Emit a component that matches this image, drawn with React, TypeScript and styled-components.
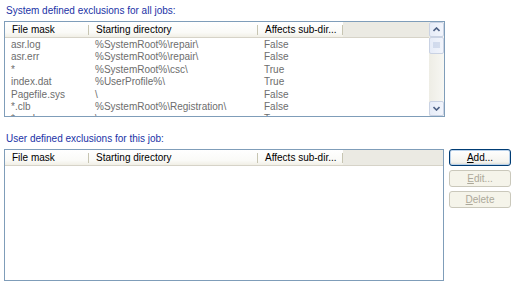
import React from "react";
import styled, { createGlobalStyle } from "styled-components";

const Global = createGlobalStyle`
  html, body { margin: 0; padding: 0; background: #ffffff; }
  body { font-family: Tahoma, "Liberation Sans", Arial, sans-serif; font-size: 10px; }
`;

const Page = styled.div`
  width: 515px;
  height: 284px;
  padding: 5px 0 0 4px;
  box-sizing: border-box;
  display: flex;
  flex-direction: column;
`;

const Label = styled.div<{ $top?: number }>`
  color: #1a32a6;
  font-size: 10px;
  line-height: 12px;
  padding-left: 2px;
  margin-top: ${(p) => p.$top ?? 0}px;
  margin-bottom: 4px;
`;

const Row = styled.div`
  display: flex;
  gap: 5px;
  align-items: flex-start;
`;

const ListBox = styled.div<{ $w: number; $h: number }>`
  width: ${(p) => p.$w}px;
  height: ${(p) => p.$h}px;
  box-sizing: border-box;
  border: 1px solid #7f9db9;
  background: #fff;
  display: flex;
  overflow: hidden;
`;

const ListMain = styled.div`
  flex: 1;
  display: flex;
  flex-direction: column;
  min-width: 0;
`;

const Header = styled.div`
  display: flex;
  height: 15px;
  background: #ebeae3;
  border-bottom: 1px solid #d6d3c8;
  flex-shrink: 0;
`;

const HeaderCell = styled.div<{ $w: number }>`
  width: ${(p) => p.$w}px;
  box-sizing: border-box;
  background: linear-gradient(#ffffff, #fafaf7 70%, #f1efe6);
  color: #000;
  line-height: 15px;
  padding-left: 7px;
  position: relative;
  white-space: nowrap;
  &::after {
    content: "";
    position: absolute;
    right: 0;
    top: 3px;
    bottom: 2px;
    width: 1px;
    background: #c7c5b2;
  }
`;

const HeaderRest = styled.div`
  flex: 1;
`;

const DataRow = styled.div`
  display: flex;
  height: 12.4px;
  line-height: 12px;
  color: #6d6d6d;
  white-space: nowrap;
  flex-shrink: 0;
`;

const Cell = styled.div<{ $w: number }>`
  width: ${(p) => p.$w}px;
  box-sizing: border-box;
  padding-left: 6px;
  overflow: hidden;
`;

const Rows = styled.div`
  padding-top: 1px;
  overflow: hidden;
  flex: 1;
`;

const Scrollbar = styled.div`
  width: 15px;
  display: flex;
  flex-direction: column;
  background: linear-gradient(90deg, #eeede5, #f7f7f3);
  flex-shrink: 0;
`;

const ScrollBtn = styled.div`
  height: 15px;
  box-sizing: border-box;
  border: 1px solid #c9d2e3;
  border-radius: 2px;
  background: linear-gradient(90deg, #e6ecf8, #f2f5fc);
  display: flex;
  align-items: center;
  justify-content: center;
`;

const Thumb = styled(ScrollBtn)`
  height: 17px;
`;

const Track = styled.div`
  flex: 1;
`;

const Buttons = styled.div`
  display: flex;
  flex-direction: column;
  gap: 4px;
`;

const Button = styled.div<{ $disabled?: boolean; $default?: boolean }>`
  width: 62px;
  height: 17px;
  box-sizing: border-box;
  border-radius: 3px;
  border: 1px solid ${(p) => (p.$disabled ? "#cac8bb" : "#003c74")};
  background: ${(p) =>
    p.$disabled ? "#f5f4ea" : "linear-gradient(#ffffff, #f4f3ee 80%, #dcdad0)"};
  color: ${(p) => (p.$disabled ? "#aca899" : "#000")};
  box-shadow: ${(p) => (p.$default ? "inset 0 0 0 1px #b9d1ea" : "none")};
  text-align: center;
  line-height: 15px;
  & u { text-decoration: underline; }
`;

const cols = [84, 169, 85];

const data = [
  ["asr.log", "%SystemRoot%\\repair\\", "False"],
  ["asr.err", "%SystemRoot%\\repair\\", "False"],
  ["*", "%SystemRoot%\\csc\\", "True"],
  ["index.dat", "%UserProfile%\\", "True"],
  ["Pagefile.sys", "\\", "False"],
  ["*.clb", "%SystemRoot%\\Registration\\", "False"],
  ["*.syslog", "\\", "True"],
];

const Arrow = ({ up }: { up?: boolean }) => (
  <svg width="7" height="5" viewBox="0 0 7 5">
    <path
      d={up ? "M0.5 4 L3.5 1 L6.5 4" : "M0.5 1 L3.5 4 L6.5 1"}
      fill="none"
      stroke="#4d6185"
      strokeWidth="1.6"
    />
  </svg>
);

const Grip = () => (
  <svg width="7" height="7" viewBox="0 0 7 7">
    <path d="M0 1h7M0 3h7M0 5h7" stroke="#b8c6e0" strokeWidth="1" />
  </svg>
);

const HeaderRow = () => (
  <Header>
    <HeaderCell $w={cols[0]}>File mask</HeaderCell>
    <HeaderCell $w={cols[1]}>Starting directory</HeaderCell>
    <HeaderCell $w={cols[2]}>Affects sub-dir...</HeaderCell>
    <HeaderRest />
  </Header>
);

export default function App() {
  return (
    <Page>
      <Global />
      <Label>System defined exclusions for all jobs:</Label>
      <ListBox $w={441} $h={96}>
        <ListMain>
          <HeaderRow />
          <Rows>
            {data.map((r, i) => (
              <DataRow key={i}>
                <Cell $w={cols[0]}>{r[0]}</Cell>
                <Cell $w={cols[1]}>{r[1]}</Cell>
                <Cell $w={cols[2]}>{r[2]}</Cell>
              </DataRow>
            ))}
          </Rows>
        </ListMain>
        <Scrollbar>
          <ScrollBtn>
            <Arrow up />
          </ScrollBtn>
          <Thumb>
            <Grip />
          </Thumb>
          <Track />
          <ScrollBtn>
            <Arrow />
          </ScrollBtn>
        </Scrollbar>
      </ListBox>
      <Label $top={16}>User defined exclusions for this job:</Label>
      <Row>
        <ListBox $w={440} $h={132}>
          <ListMain>
            <HeaderRow />
          </ListMain>
        </ListBox>
        <Buttons>
          <Button $default>
            <u>A</u>dd...
          </Button>
          <Button $disabled>
            <u>E</u>dit...
          </Button>
          <Button $disabled>
            <u>D</u>elete
          </Button>
        </Buttons>
      </Row>
    </Page>
  );
}
